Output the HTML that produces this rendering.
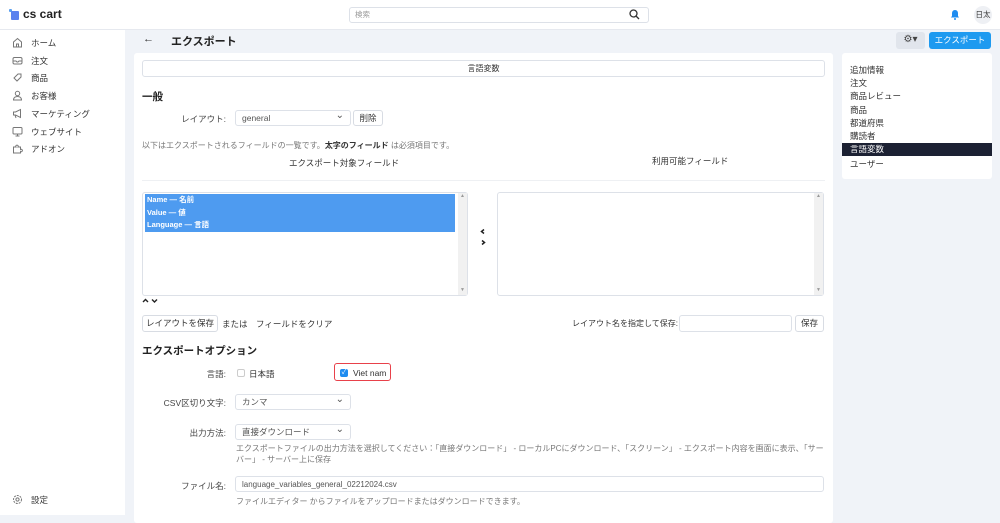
<!DOCTYPE html>
<html><head><meta charset="utf-8"><style>
*{box-sizing:border-box;margin:0;padding:0}
body{width:1000px;height:515px;overflow:hidden;background:#f0f3f8;font-family:"Liberation Sans","Noto Sans CJK JP",sans-serif;font-size:8.5px;color:#333;position:relative}
.a{position:absolute;white-space:nowrap}
.top{left:0;top:0;width:1000px;height:30px;background:#fff;border-bottom:1px solid #e6e9ef}
.side{left:0;top:30px;width:125px;height:485px;background:#fff}
.nav{left:12px;font-size:8.5px;color:#333}
.nav svg{position:absolute;left:0;top:0}
.nav span{position:absolute;left:19px;top:0}
.card{background:#fff;border-radius:3px}
.inp{background:#fff;border:1px solid #dde1e8;border-radius:3px}
.btn{background:#fff;border:1px solid #d8dce3;border-radius:3px;text-align:center}
.lbl{text-align:right;color:#444}
.hint{color:#777;font-size:8px}
.sel{color:#555;padding-left:6px;line-height:15px}
.chev:after{content:"⌄";position:absolute;right:6px;top:-3px;font-size:10px;color:#555}
</style></head><body>
<div class="a top"></div>
<div class="a" style="left:9px;top:9px;width:3px;height:3px;background:#5aa0f0;border-radius:1px"></div>
<div class="a" style="left:11px;top:11px;width:8px;height:9px;background:#5b82ee;border-radius:1px"></div>
<div class="a" style="left:23px;top:7px;font-size:12px;font-weight:bold;color:#222">cs cart</div>
<div class="a inp" style="left:349px;top:7px;width:300px;height:16px;color:#999;padding-left:5px;line-height:14px;font-size:7.5px">検索</div>
<svg class="a" style="left:629px;top:9px" width="11" height="11" viewBox="0 0 11 11"><circle cx="4.5" cy="4.5" r="3.5" fill="none" stroke="#333" stroke-width="1.3"/><path d="M7 7l3 3" stroke="#333" stroke-width="1.3"/></svg>
<svg class="a" style="left:950px;top:9px" width="10" height="11" viewBox="0 0 10 11"><path d="M5 1c2 0 3 1.5 3 3.5v2.5l1 1.5H1l1-1.5V4.5C2 2.5 3 1 5 1z" fill="#1e8cf0"/><circle cx="5" cy="10" r="1" fill="#1e8cf0"/></svg>
<div class="a" style="left:974px;top:6px;width:18px;height:18px;border-radius:9px;background:#eef0f4;font-size:7.5px;line-height:18px;text-align:center">日太</div>
<div class="a side"></div>
<div class="a nav" style="top:37px"><svg width="11" height="11" viewBox="0 0 11 11"><path d="M1.5 5L5.5 1.5 9.5 5v5h-8z M4.5 10V7h2v3" fill="none" stroke="#777"/></svg><span>ホーム</span></div>
<div class="a nav" style="top:55px"><svg width="11" height="11" viewBox="0 0 11 11"><rect x="1" y="2.5" width="9" height="6.5" rx="1.5" fill="none" stroke="#777"/><path d="M1 6h3l1 1h1l1-1h3" fill="none" stroke="#777"/></svg><span>注文</span></div>
<div class="a nav" style="top:72px"><svg width="11" height="11" viewBox="0 0 11 11"><path d="M2 6l4-4h3v3l-4 4z" fill="none" stroke="#777"/></svg><span>商品</span></div>
<div class="a nav" style="top:90px"><svg width="11" height="11" viewBox="0 0 11 11"><circle cx="5.5" cy="3.5" r="2.2" fill="none" stroke="#777"/><path d="M1.5 10c0-2.5 2-3.5 4-3.5s4 1 4 3.5z" fill="none" stroke="#777"/></svg><span>お客様</span></div>
<div class="a nav" style="top:108px"><svg width="11" height="11" viewBox="0 0 11 11"><path d="M1.5 4h2l5-2.5v8l-5-2.5h-2z M3 7l1 3" fill="none" stroke="#777"/></svg><span>マーケティング</span></div>
<div class="a nav" style="top:126px"><svg width="11" height="11" viewBox="0 0 11 11"><rect x="1" y="1.5" width="9" height="6.5" rx="1" fill="none" stroke="#777"/><path d="M3.5 10h4M5.5 8v2" stroke="#777"/></svg><span>ウェブサイト</span></div>
<div class="a nav" style="top:143px"><svg width="11" height="11" viewBox="0 0 11 11"><path d="M1.5 4h2.5a1.2 1.2 0 112 0h2.5v2.5a1.2 1.2 0 110 2V10h-7z" fill="none" stroke="#777"/></svg><span>アドオン</span></div>
<div class="a nav" style="top:494px"><svg width="11" height="11" viewBox="0 0 11 11"><circle cx="5.5" cy="5.5" r="4" fill="none" stroke="#777" stroke-dasharray="2 1"/><circle cx="5.5" cy="5.5" r="1.6" fill="none" stroke="#777"/></svg><span>設定</span></div>

<div class="a" style="left:143px;top:33px;font-size:11px;color:#333">←</div>
<div class="a" style="left:171px;top:33px;font-size:11px;font-weight:bold;color:#222">エクスポート</div>
<div class="a" style="left:896px;top:32px;width:29px;height:17px;background:#e1e5ec;border-radius:3px;font-size:10px;line-height:16px;text-align:center;color:#444">⚙▾</div>
<div class="a" style="left:929px;top:32px;width:62px;height:17px;background:#1e9af0;border-radius:3px;color:#fff;font-size:8.5px;line-height:17px;text-align:center">エクスポート</div>

<div class="a card" style="left:134px;top:53px;width:699px;height:470px"></div>
<div class="a inp" style="left:142px;top:60px;width:683px;height:17px;text-align:center;line-height:15px;font-size:8px">言語変数</div>
<div class="a" style="left:142px;top:89px;font-size:10.5px;font-weight:bold;color:#222">一般</div>
<div class="a lbl" style="left:150px;top:113px;width:76px">レイアウト:</div>
<div class="a inp sel chev" style="left:235px;top:110px;width:116px;height:16px">general</div>
<div class="a btn" style="left:353px;top:110px;width:30px;height:16px;line-height:14px">削除</div>
<div class="a hint" style="left:142px;top:140px">以下はエクスポートされるフィールドの一覧です。<b style="color:#333">太字のフィールド</b> は必須項目です。</div>
<div class="a" style="left:289px;top:157px">エクスポート対象フィールド</div>
<div class="a" style="left:652px;top:155px">利用可能フィールド</div>
<div class="a" style="left:142px;top:180px;width:683px;height:1px;background:#eef0f3"></div>
<div class="a inp" style="left:142px;top:192px;width:326px;height:104px"></div>
<div class="a" style="left:145px;top:194px;width:310px;height:38px;background:#4e9bf0;color:#fff;font-weight:bold;font-size:7.5px;line-height:12.5px;padding-left:2px">Name — 名前<br>Value — 値<br>Language — 言語</div>
<div class="a" style="left:458px;top:193px;width:9px;height:102px;background:#f1f1f1"></div>
<div class="a" style="left:460px;top:193px;font-size:5px;color:#999">▲</div>
<div class="a" style="left:460px;top:287px;font-size:5px;color:#999">▼</div>
<svg class="a" style="left:480px;top:228px" width="6" height="18" viewBox="0 0 6 18"><path d="M4 1.5L1.5 3.5 4 5.5M2 12.5l2.5 2-2.5 2" fill="none" stroke="#222" stroke-width="1.5"/></svg>
<div class="a inp" style="left:497px;top:192px;width:327px;height:104px"></div>
<div class="a" style="left:814px;top:193px;width:9px;height:102px;background:#f1f1f1"></div>
<div class="a" style="left:816px;top:193px;font-size:5px;color:#999">▲</div>
<div class="a" style="left:816px;top:287px;font-size:5px;color:#999">▼</div>
<svg class="a" style="left:142px;top:297px" width="16" height="7" viewBox="0 0 16 7"><path d="M1 5l2.5-2.5L6 5M10 2.5l2.5 2.5L15 2.5" fill="none" stroke="#222" stroke-width="1.4"/></svg>
<div class="a btn" style="left:142px;top:315px;width:76px;height:17px;line-height:15px">レイアウトを保存</div>
<div class="a" style="left:222px;top:318px">または　フィールドをクリア</div>
<div class="a" style="left:572px;top:318px;font-size:8px">レイアウト名を指定して保存:</div>
<div class="a inp" style="left:679px;top:315px;width:113px;height:17px"></div>
<div class="a btn" style="left:795px;top:315px;width:29px;height:17px;line-height:15px">保存</div>
<div class="a" style="left:142px;top:343px;font-size:10.5px;font-weight:bold;color:#222">エクスポートオプション</div>
<div class="a lbl" style="left:150px;top:368px;width:76px">言語:</div>
<div class="a" style="left:237px;top:369px;width:8px;height:8px;border:1px solid #ccc;border-radius:2px"></div>
<div class="a" style="left:249px;top:368px">日本語</div>
<div class="a" style="left:334px;top:363px;width:57px;height:18px;border:1.5px solid #e8414a;border-radius:3px"></div>
<div class="a" style="left:340px;top:369px;width:8px;height:8px;background:#1e8cf0;border-radius:2px;color:#fff;font-size:7px;line-height:8px;text-align:center">✓</div>
<div class="a" style="left:353px;top:368px">Viet nam</div>
<div class="a lbl" style="left:150px;top:397px;width:76px">CSV区切り文字:</div>
<div class="a inp sel chev" style="left:235px;top:394px;width:116px;height:16px">カンマ</div>
<div class="a lbl" style="left:150px;top:427px;width:76px">出力方法:</div>
<div class="a inp sel chev" style="left:235px;top:424px;width:116px;height:16px">直接ダウンロード</div>
<div class="a hint" style="left:236px;top:443px;line-height:11px;white-space:normal;width:590px">エクスポートファイルの出力方法を選択してください：「直接ダウンロード」 - ローカルPCにダウンロード、「スクリーン」 - エクスポート内容を画面に表示、「サーバー」 - サーバー上に保存</div>
<div class="a lbl" style="left:150px;top:480px;width:76px">ファイル名:</div>
<div class="a inp sel" style="left:235px;top:476px;width:589px;height:16px;font-size:8px">language_variables_general_02212024.csv</div>
<div class="a hint" style="left:236px;top:496px">ファイルエディター からファイルをアップロードまたはダウンロードできます。</div>

<div class="a card" style="left:842px;top:53px;width:150px;height:126px"></div>
<div class="a" style="left:850px;top:64px;line-height:13.2px">追加情報<br>注文<br>商品レビュー<br>商品<br>都道府県<br>購読者</div>
<div class="a" style="left:842px;top:143px;width:150px;height:13px;background:#1c2133;color:#fff;padding-left:8px;line-height:13px">言語変数</div>
<div class="a" style="left:850px;top:158px">ユーザー</div>
</body></html>
